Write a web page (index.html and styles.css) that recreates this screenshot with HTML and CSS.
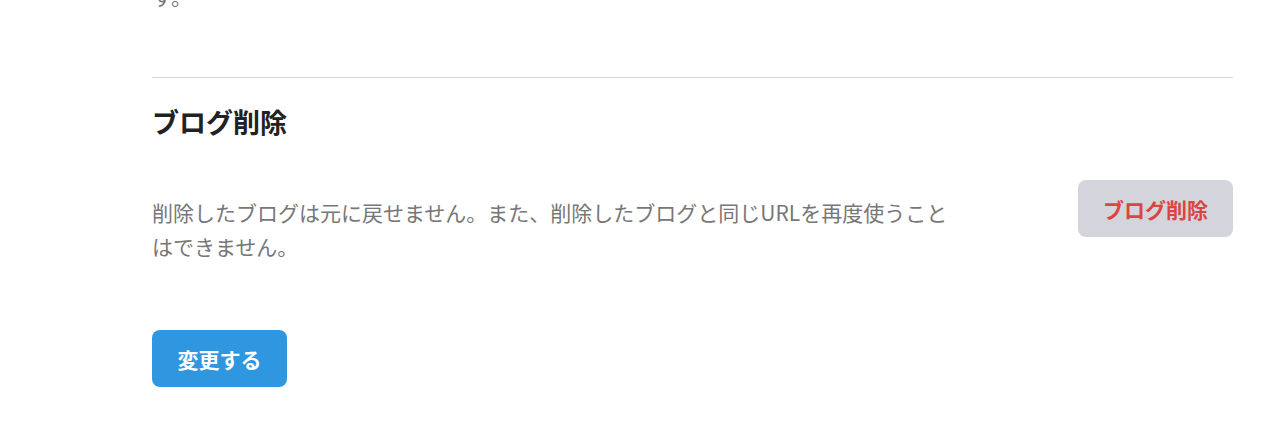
FILE: index.html
```html
<!DOCTYPE html>
<html lang="ja">
	<head>
		<meta charset="utf-8">
		<title>ブログ設定</title>
		<link rel="stylesheet" href="styles.css">
	</head>
	<body>
		<div class="main">
			<p class="prev">す。</p>
			<hr class="divider">
			<h2 class="title">ブログ削除</h2>
			<div class="row">
				<p class="note">削除したブログは元に戻せません。また、削除したブログと同じURLを再度使うことはできません。</p>
				<button type="button" class="delete">ブログ削除</button>
			</div>
			<button type="button" class="submit">変更する</button>
		</div>
	</body>
</html>
```

FILE: styles.css
```css
body {
	margin: 0;
	background-color: #fff;
	font-family: "Noto Sans CJK JP", "Noto Sans", sans-serif;
	overflow: hidden;
}

.main {
	width: 1081px;
	margin-left: 152px;
}

/* tail of the section above, scrolled partly out of view */
.prev {
	margin: -21px 0 0;
	height: 34px;
	line-height: 34px;
	font-size: 21px;
	color: #777;
}

.divider {
	margin: 64px 0 0;
	border: none;
	border-top: 1px solid #d8d8d8;
}

.title {
	margin: 25px 0 0;
	font-size: 27px;
	line-height: 38px;
	color: #222;
}

.row {
	display: flex;
	justify-content: space-between;
	align-items: flex-start;
	margin-top: 39px;
}

.note {
	width: 800px;
	margin: 15px 0 0;
	font-size: 21px;
	line-height: 34px;
	color: #777;
}

button {
	font-family: inherit;
	font-weight: bold;
	font-size: 21px;
	height: 57px;
	border: none;
	border-radius: 8px;
	cursor: pointer;
}

.delete {
	width: 155px;
	background-color: #d4d5dc;
	color: #db4540;
}

.submit {
	margin-top: 67px;
	width: 135px;
	background-color: #2f96e0;
	color: #fff;
}
```
